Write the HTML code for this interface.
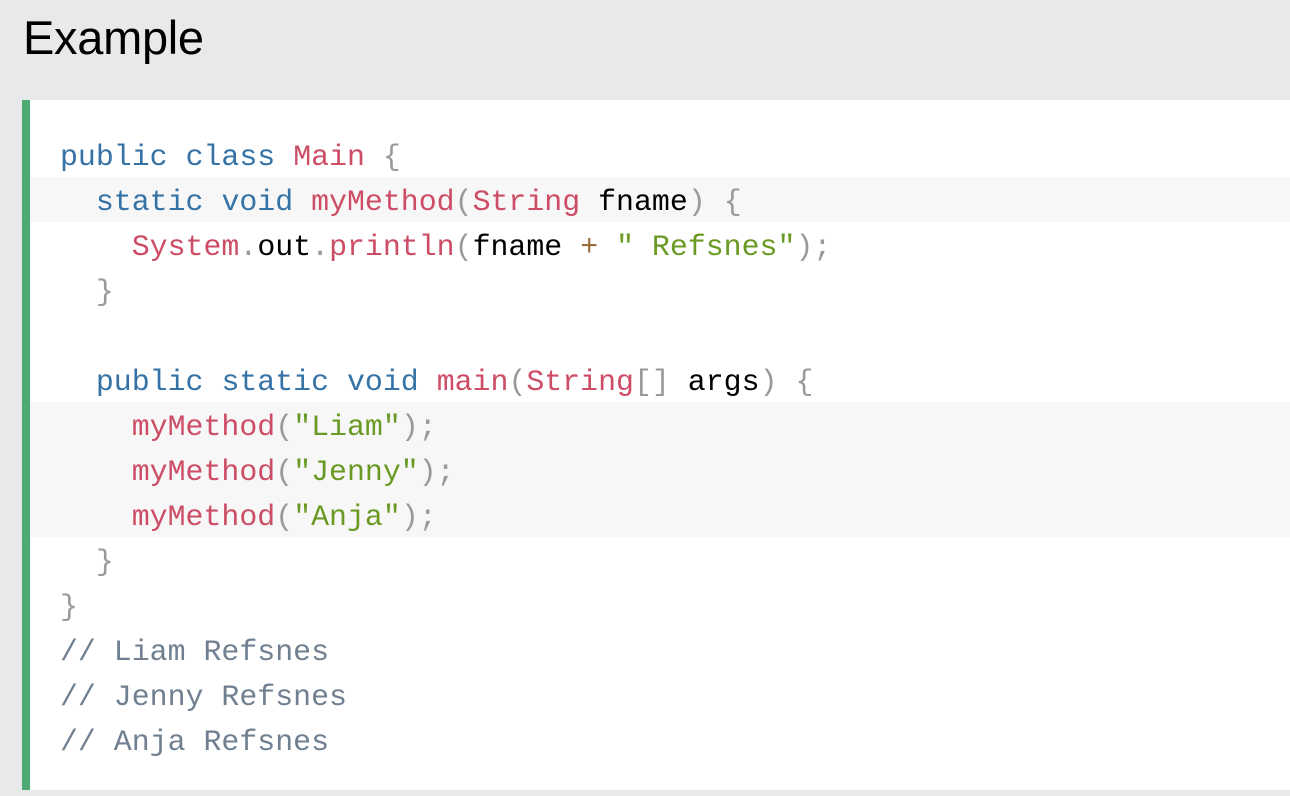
<!DOCTYPE html>
<html><head><style>
body{margin:0;background:#e7e9eb;width:1290px;height:796px;overflow:hidden;font-family:"Liberation Sans",sans-serif}
h2{margin:0;position:absolute;left:23px;top:10px;font-size:47px;font-weight:normal;color:#000;letter-spacing:-0.3px}
.box{position:absolute;left:22px;top:100px;width:1268px;height:690px;background:#fff;border-left:8px solid #4caa72;box-sizing:border-box}
.code{margin:0;position:absolute;left:0;top:32px;right:0;font-family:"Liberation Mono",monospace;font-size:29.9px;line-height:45px;color:#000}
.l{padding-left:30px;height:45px;white-space:pre}
.l span,.l{vertical-align:top}
.t{position:relative;top:3px}
.h{background:#f7f7f7}
.k{color:#3572a5}.f{color:#cc4d65}.p{color:#999}.s{color:#6a9a23}.o{color:#9a6e3a}.c{color:#708090}
</style></head><body>
<h2>Example</h2>
<div class="box"><div class="code"><div class="l"><span class="t"><span class="k">public</span> <span class="k">class</span> <span class="f">Main</span> <span class="p">{</span></span></div><div class="l h"><span class="t">  <span class="k">static</span> <span class="k">void</span> <span class="f">myMethod</span><span class="p">(</span><span class="f">String</span> fname<span class="p">)</span> <span class="p">{</span></span></div><div class="l"><span class="t">    <span class="f">System</span><span class="p">.</span>out<span class="p">.</span><span class="f">println</span><span class="p">(</span>fname <span class="o">+</span> <span class="s">" Refsnes"</span><span class="p">);</span></span></div><div class="l"><span class="t">  <span class="p">}</span></span></div><div class="l"> </div><div class="l"><span class="t">  <span class="k">public</span> <span class="k">static</span> <span class="k">void</span> <span class="f">main</span><span class="p">(</span><span class="f">String</span><span class="p">[]</span> args<span class="p">)</span> <span class="p">{</span></span></div><div class="l h"><span class="t">    <span class="f">myMethod</span><span class="p">(</span><span class="s">"Liam"</span><span class="p">);</span></span></div><div class="l h"><span class="t">    <span class="f">myMethod</span><span class="p">(</span><span class="s">"Jenny"</span><span class="p">);</span></span></div><div class="l h"><span class="t">    <span class="f">myMethod</span><span class="p">(</span><span class="s">"Anja"</span><span class="p">);</span></span></div><div class="l"><span class="t">  <span class="p">}</span></span></div><div class="l"><span class="t"><span class="p">}</span></span></div><div class="l c"><span class="t">// Liam Refsnes</span></div><div class="l c"><span class="t">// Jenny Refsnes</span></div><div class="l c"><span class="t">// Anja Refsnes</span></div></div></div>
</body></html>
